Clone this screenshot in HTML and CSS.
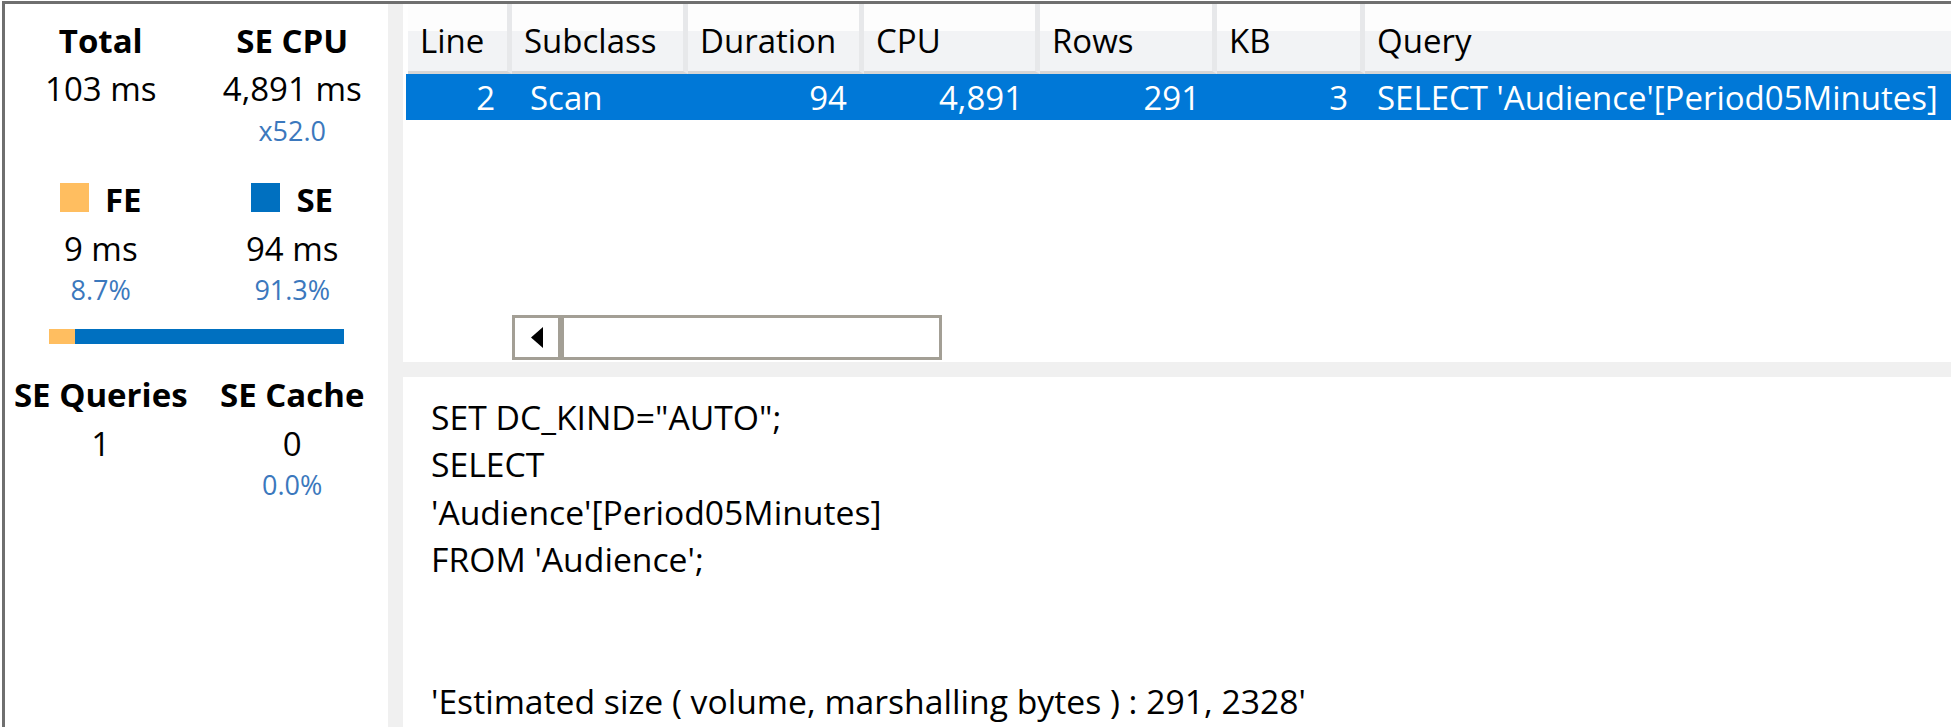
FILE: index.html
```html
<!DOCTYPE html>
<html lang="en">
<head>
<meta charset="utf-8">
<title>Server Timings</title>
<link rel="stylesheet" href="styles.css">
</head>
<body>
<div class="frame">
  <aside class="stats">
    <div class="pair pair-a">
      <div class="stat">
        <div class="label">Total</div>
        <div class="value">103 ms</div>
      </div>
      <div class="stat">
        <div class="label">SE CPU</div>
        <div class="value">4,891 ms</div>
        <div class="sub">x52.0</div>
      </div>
    </div>
    <div class="pair pair-b">
      <div class="stat">
        <div class="label legend"><span class="swatch swatch-fe"></span>FE</div>
        <div class="value">9 ms</div>
        <div class="sub">8.7%</div>
      </div>
      <div class="stat">
        <div class="label legend"><span class="swatch swatch-se"></span>SE</div>
        <div class="value">94 ms</div>
        <div class="sub">91.3%</div>
      </div>
    </div>
    <div class="ratio-bar">
      <div class="ratio-fe" style="width:8.7%"></div>
      <div class="ratio-se"></div>
    </div>
    <div class="pair pair-c">
      <div class="stat">
        <div class="label">SE Queries</div>
        <div class="value">1</div>
      </div>
      <div class="stat">
        <div class="label">SE Cache</div>
        <div class="value">0</div>
        <div class="sub">0.0%</div>
      </div>
    </div>
  </aside>
  <div class="vsplit"></div>
  <main class="detail">
    <section class="grid">
      <div class="head-row">
        <div class="head-cell first">Line</div>
        <div class="head-cell">Subclass</div>
        <div class="head-cell">Duration</div>
        <div class="head-cell">CPU</div>
        <div class="head-cell">Rows</div>
        <div class="head-cell">KB</div>
        <div class="head-cell last">Query</div>
      </div>
      <div class="data-row selected">
        <div class="cell num">2</div>
        <div class="cell text c-sub">Scan</div>
        <div class="cell num">94</div>
        <div class="cell num">4,891</div>
        <div class="cell num">291</div>
        <div class="cell num">3</div>
        <div class="cell text c-query">SELECT 'Audience'[Period05Minutes]</div>
      </div>
      <div class="grid-fill"></div>
      <div class="hscroll">
        <div class="hscroll-btn">
          <svg width="12" height="21" viewBox="0 0 12 21"><path d="M12 0 L0 10.5 L12 21 Z" fill="#000"/></svg>
        </div>
        <div class="hscroll-track"></div>
      </div>
    </section>
    <div class="hsplit"></div>
    <pre class="query-text">SET DC_KIND="AUTO";
SELECT
'Audience'[Period05Minutes]
FROM 'Audience';


'Estimated size ( volume, marshalling bytes ) : 291, 2328'</pre>
  </main>
</div>
</body>
</html>
```

FILE: styles.css
```css
html, body {
  margin: 0;
  padding: 0;
  background: #ffffff;
  overflow: hidden;
}

body {
  font-family: "Open Sans", "Noto Sans", sans-serif;
  color: #000;
  width: 1951px;
  height: 727px;
}

.frame {
  display: flex;
  height: 723px;
  margin: 1px 0 0 2px;
  border-top: 3px solid #6f6f6f;
  border-left: 3px solid #6f6f6f;
}

/* ---------- left statistics panel ---------- */
.stats {
  flex: none;
  width: 383px;
  padding-top: 14px;
}

.pair {
  display: grid;
  grid-template-columns: 1fr 1fr;
  text-align: center;
}

.label {
  font-size: 33px;
  font-weight: 700;
  line-height: 46px;
  white-space: nowrap;
}

.value {
  font-size: 33px;
  line-height: 46px;
  white-space: nowrap;
}

.sub {
  font-size: 27px;
  line-height: 42px;
  color: #3b78bd;
}

.pair-a .value {
  margin-top: 2px;
}

.pair-a .sub {
  margin-top: -2px;
}

.pair-b {
  margin-top: 25px;
}

.pair-b .value {
  margin-top: 3px;
}

.pair-b .sub {
  line-height: 40px;
  margin-top: -2px;
}

.swatch {
  display: inline-block;
  width: 29px;
  height: 29px;
  margin-right: 16px;
  vertical-align: baseline;
}

.swatch-fe {
  background: #ffbe60;
}

.swatch-se {
  background: #0070c0;
}

.ratio-bar {
  display: flex;
  width: 295px;
  height: 15px;
  margin: 19px auto 0;
}

.ratio-fe {
  background: #ffbe60;
}

.ratio-se {
  flex: 1;
  background: #0070c0;
}

.pair-c {
  margin-top: 28px;
}

.pair-c .value {
  margin-top: 3px;
}

.pair-c .sub {
  line-height: 40px;
  margin-top: -2px;
}

/* ---------- splitters ---------- */
.vsplit {
  flex: none;
  width: 15px;
  background: #f0f0f0;
}

.hsplit {
  flex: none;
  height: 15px;
  background: #f0f0f0;
}

/* ---------- right detail panel ---------- */
.detail {
  flex: 1;
  min-width: 0;
  display: flex;
  flex-direction: column;
}

.grid {
  flex: none;
  height: 358px;
  display: flex;
  flex-direction: column;
  padding-left: 3px;
  overflow: hidden;
}

.head-row,
.data-row {
  display: grid;
  grid-template-columns: 106px 176px 176px 176px 177px 148px 1fr;
  font-size: 33px;
  white-space: nowrap;
}

.head-cell {
  height: 61px;
  padding: 6px 0 0 12px;
  line-height: 61px;
  background: linear-gradient(to bottom, #fdfdfd 0, #fdfdfd 41%, #f2f3f5 41%, #f2f3f5 100%);
  border-right: 5px solid #e7e8ea;
  border-bottom: 3px solid #d6d6d6;
  overflow: hidden;
}

.head-cell.first {
  margin-left: 2px;
}

.head-cell.last {
  border-right: none;
}

.data-row {
  height: 46px;
}

.data-row.selected {
  background: #0078d7;
  color: #ffffff;
}

.cell {
  padding-top: 2px;
  line-height: 44px;
  overflow: hidden;
}

.cell.num {
  text-align: right;
  padding-right: 17px;
}

.cell.c-sub {
  padding-left: 18px;
}

.cell.c-query {
  padding-left: 12px;
}

.grid-fill {
  flex: 1;
}

.hscroll {
  flex: none;
  display: flex;
  width: 424px;
  height: 39px;
  margin: 0 0 2px 106px;
  border: 3px solid #a39f95;
  background: #ffffff;
}

.hscroll-btn {
  flex: none;
  width: 43px;
  display: flex;
  align-items: center;
  justify-content: center;
  border-right: 6px solid #a39f95;
}

.hscroll-track {
  flex: 1;
}

.query-text {
  flex: 1;
  margin: 0;
  padding: 17px 0 0 28px;
  font-family: "Open Sans", "Noto Sans", sans-serif;
  font-size: 33.7px;
  line-height: 47.4px;
  white-space: pre;
  overflow: hidden;
}
```
